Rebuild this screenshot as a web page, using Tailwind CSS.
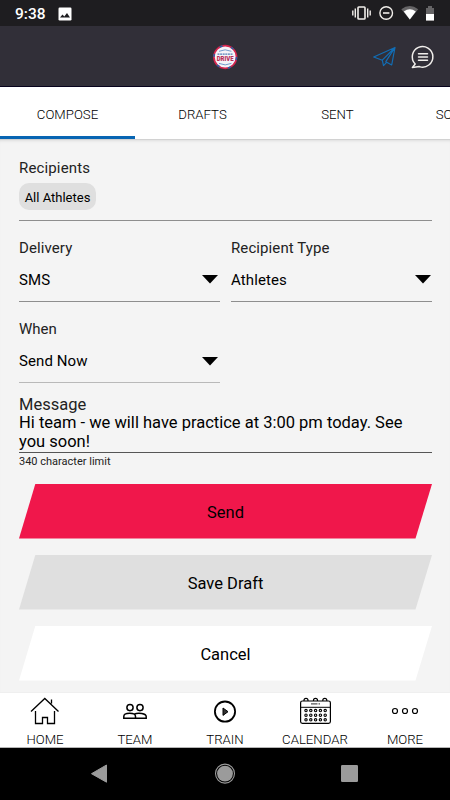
<!DOCTYPE html>
<html lang="en">
<head>
<meta charset="utf-8">
<title>Compose message</title>
<script src="https://cdn.jsdelivr.net/npm/@tailwindcss/browser@4"></script>
</head>
<body class="w-[450px] h-[800px] overflow-hidden flex flex-col bg-[#f4f4f4] text-black font-['Roboto','Noto_Sans',sans-serif]">

<div class="h-[26px] shrink-0 bg-[#1e1d20] flex items-center pl-[15px] text-white">
  <span class="text-[15.5px] font-medium leading-[26px] w-[43px] pt-[2px]">9:38</span>
  <svg class="mt-px" width="14" height="14" viewBox="0 0 14 14"><rect x=".5" y=".5" width="13" height="13" rx="1.2" fill="#fff"/><path d="M2 10.5 4.5 7.5 6.3 9.6 9 6 12 10.5Z" fill="#1e1d20"/></svg>
  <div class="flex-1"></div>
  <svg width="98" height="26" viewBox="352 0 98 26" fill="none" stroke="#f1eeea">
    <rect x="358" y="7" width="7" height="12" rx=".8" stroke-width="1.6"/>
    <path d="M355.3 8.5v9M367.7 8.5v9M352.8 10.5v5M370.2 10.5v5" stroke-width="1.4"/>
    <circle cx="386.2" cy="13" r="6.3" stroke-width="1.4"/><path d="M383 13h6.4" stroke-width="1.6"/>
    <path d="M401.3 9.2Q409.7 2.8 418.2 9.2L409.8 19.5Z" fill="#656466" stroke="none"/>
    <path d="M403.8 11.5Q409.8 7 415.8 11.5L409.8 19.6Z" fill="#fff" stroke="none"/>
    <path d="M426 8h2V6h4v2h2v6h-8Z" fill="#656466" stroke="none"/>
    <path d="M426 14h8v6.6h-8Z" fill="#fff" stroke="none"/>
  </svg>
</div>

<header class="h-[61px] shrink-0 bg-[#312f38] border-b border-[#07031d] flex items-center">
  <svg width="450" height="60" viewBox="0 26 450 60" fill="none">
    <circle cx="225.2" cy="57" r="11.3" fill="#f5f3f8" stroke="#d5264f" stroke-width="1.7"/>
    <circle cx="225.2" cy="57" r="11.3" stroke="#2860a6" stroke-width="1.5" stroke-dasharray="3 8.8"/>
    <path d="M219 51.3q6.2-3 12.4 0M219 63.4q6.2 3 12.4 0" stroke="#739bcb"/>
    <path d="M217.5 54.1h15.5" stroke="#537fb5" stroke-width="1.2" stroke-dasharray="2 .6"/>
    <text x="216.7" y="60.6" font-size="6.7" font-weight="900" textLength="17" lengthAdjust="spacingAndGlyphs" fill="#b72d58" font-family="Roboto">DRIVE</text>
    <g stroke="#126db4" stroke-width="1.2" stroke-linejoin="round">
      <path d="M395 47.5 373.7 57l8.6 3.2L395 47.5 391.7 65l-5.9-3.3L395 47.5M382.3 60.2l1.2 5.4 3.1-3.2"/>
    </g>
    <g stroke="#f1efec" stroke-width="1.5" stroke-linejoin="round" stroke-linecap="round">
      <path d="M415.2 64A10.3 10.3 0 1 1 419.4 66.6L412.4 67.4 415.2 64Z"/>
      <path d="M418.5 53.8h9M418.5 57h9M418.5 60.2h9"/>
    </g>
  </svg>
</header>

<nav class="relative z-10 h-[53px] shrink-0 bg-white flex text-[13.2px] font-light leading-[53px] text-center overflow-hidden border-b border-[#d2d2d2]">
  <div class="w-[135px] shrink-0 border-b-[3px] border-[#0865b3] pt-px">COMPOSE</div>
  <div class="w-[135px] shrink-0 pt-px">DRAFTS</div>
  <div class="w-[135px] shrink-0 pt-px">SENT</div>
  <div class="w-[135px] shrink-0 pt-px">SCHEDULED</div>
</nav>

<main class="h-[552px] shrink-0 px-[19px] pt-[17px] shadow-[inset_0_3px_3px_-2px_#ddd]">
  <div class="w-[413px]">
    <section class="h-[64px] border-b border-[#8e8e8e]">
      <div class="h-[26px] text-[15px] text-[#222] leading-[22px] tracking-[0.15px]">Recipients</div>
      <span class="inline-block align-top w-[77px] h-[27px] rounded-[10px] bg-[#dfdfdf] text-[13px] leading-[30px] text-center whitespace-nowrap">All Athletes</span>
    </section>
    <div class="flex gap-[11px] text-[15px]">
      <section class="w-[201px] h-[81px] border-b border-[#8e8e8e] pt-[16px]">
        <div class="leading-[22px] text-[#222] tracking-[0.1px]">Delivery</div>
        <div class="flex justify-between pt-[10px] pr-[2px]"><span class="leading-[22px] tracking-[0.1px]">SMS</span><svg class="mt-[6px]" width="16" height="9"><path d="M0 0h16L8 8.5Z"/></svg></div>
      </section>
      <section class="w-[201px] h-[81px] border-b border-[#8e8e8e] pt-[16px]">
        <div class="leading-[22px] text-[#222] tracking-[0.1px]">Recipient Type</div>
        <div class="flex justify-between pt-[10px] pr-[1.5px]"><span class="leading-[22px] tracking-[0.1px]">Athletes</span><svg class="mt-[6px]" width="16" height="9"><path d="M0 0h16L8 8.5Z"/></svg></div>
      </section>
    </div>
    <section class="w-[201px] h-[81px] border-b border-[#b9b9b9] pt-[17px] text-[15px]">
      <div class="leading-[21px] text-[#222]">When</div>
      <div class="flex justify-between pt-[11px] pr-[2px]"><span class="leading-[21px] tracking-[0.1px]">Send Now</span><svg class="mt-[6px]" width="16" height="9"><path d="M0 0h16L8 8.5Z"/></svg></div>
    </section>
    <section class="h-[70px] border-b border-[#555] pt-[12px] text-[16.5px]">
      <div class="leading-[19px] text-[#222]">Message</div>
      <div class="-mt-px leading-[19px] whitespace-nowrap">Hi team - we will have practice at 3:00 pm today. See<br>you soon!</div>
    </section>
    <div class="h-[31px] text-[11px] text-[#222] leading-[17px]">340 character limit</div>
    <div class="flex flex-col gap-[16.5px] text-[16.5px] leading-[57px] text-center">
      <div class="h-[54.5px] bg-[#f0174b] [clip-path:polygon(16.3px_0,100%_0,396.5px_100%,0_100%)]">Send</div>
      <div class="h-[54.5px] bg-[#dfdfdf] [clip-path:polygon(16.3px_0,100%_0,396.5px_100%,0_100%)]">Save Draft</div>
      <div class="h-[54.5px] bg-white [clip-path:polygon(16.3px_0,100%_0,396.5px_100%,0_100%)]">Cancel</div>
    </div>
  </div>
</main>

<nav class="h-[56px] shrink-0 grid grid-cols-5 bg-white border-t border-b border-t-[#efefef] border-b-[#b5b5b5] text-[13.2px] font-light text-center leading-[16px]">
  <div class="flex flex-col items-center gap-[1px]">
    <svg width="90" height="38" viewBox="0 693 90 38" fill="none" stroke="#000" stroke-width="1.3"><path d="M31 711.5 44.8 698.5 58.5 711.5M35.5 711v12.5h7v-6h5v6h7V711M51.5 703.5v-4"/></svg><span>HOME</span>
  </div>
  <div class="flex flex-col items-center gap-[1px]">
    <svg width="90" height="38" viewBox="90 693 90 38" fill="none" stroke="#000" stroke-width="1.5"><circle cx="130" cy="707.6" r="3.1"/><circle cx="140" cy="707.6" r="3.1"/><path d="M123.8 718.2V716.5c0-4.2 11.7-4.2 11.7 0v1.7ZM134 714.2c4.5-1.8 12.2-.7 12.2 2.3v1.7h-10.7"/></svg><span>TEAM</span>
  </div>
  <div class="flex flex-col items-center gap-[1px]">
    <svg width="90" height="38" viewBox="180 693 90 38"><circle cx="225" cy="711.6" r="10.1" fill="none" stroke="#000" stroke-width="1.8"/><path d="M223 708v7.4l5-3.7Z" fill="#333" stroke="#000" stroke-linejoin="round"/></svg><span>TRAIN</span>
  </div>
  <div class="flex flex-col items-center gap-[1px]">
    <svg width="90" height="38" viewBox="270 693 90 38" fill="none" stroke="#000" stroke-width="1.2">
      <rect x="300.6" y="701" width="29.8" height="22.4" rx="1.8"/><path d="M301 707.3h29" stroke-width="1"/><path d="M311 703.8h9" stroke="#555" stroke-dasharray="6.5 1"/>
      <path d="M304 701v-.7a2 2 0 0 1 4 0v.7M313.5 701v-.7a2 2 0 0 1 4 0v.7M322.8 701v-.7a2 2 0 0 1 4 0v.7"/>
      <g stroke-width="1.1"><circle cx="306" cy="710.6" r="1.2"/><circle cx="310.8" cy="710.6" r="1.2"/><circle cx="315.6" cy="710.6" r="1.2"/><circle cx="320.4" cy="710.6" r="1.2"/><circle cx="325.2" cy="710.6" r="1.2"/>
      <circle cx="306" cy="715.2" r="1.2"/><circle cx="310.8" cy="715.2" r="1.2"/><circle cx="315.6" cy="715.2" r="1.2"/><circle cx="320.4" cy="715.2" r="1.2"/><circle cx="325.2" cy="715.2" r="1.2"/>
      <circle cx="306" cy="719.8" r="1.2"/><circle cx="310.8" cy="719.8" r="1.2"/><circle cx="315.6" cy="719.8" r="1.2"/><circle cx="320.4" cy="719.8" r="1.2"/><circle cx="325.2" cy="719.8" r="1.2"/></g>
    </svg><span>CALENDAR</span>
  </div>
  <div class="flex flex-col items-center gap-[1px]">
    <svg width="90" height="38" viewBox="360 693 90 38" fill="none" stroke="#000" stroke-width="1.2"><circle cx="395" cy="711" r="2.5"/><circle cx="405" cy="711" r="2.5"/><circle cx="415" cy="711" r="2.5"/></svg><span>MORE</span>
  </div>
</nav>

<div class="h-[52px] shrink-0 bg-black">
  <svg width="450" height="52" viewBox="0 748 450 52" fill="#9b9b9b"><path d="M91.5 773.7 106.5 765v17.2Z" stroke="#9b9b9b" stroke-linejoin="round"/><circle cx="225" cy="773.6" r="7.9"/><circle cx="225" cy="773.6" r="9.5" fill="none" stroke="#9b9b9b" stroke-width="1.1"/><rect x="341" y="765" width="17" height="17" rx="1.3"/></svg>
</div>
</body>
</html>
